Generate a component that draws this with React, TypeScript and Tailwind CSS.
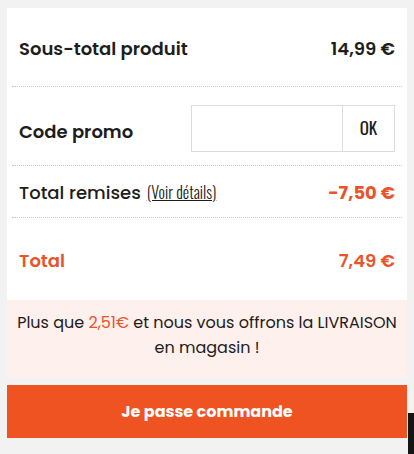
import React from 'react';

const Row: React.FC<{ className?: string; children: React.ReactNode }> = ({ className = '', children }) => (
    <div className={`mx-[5px] px-[7px] flex items-center justify-between border-b border-dotted border-[#c8c8c8] ${className}`}>
        {children}
    </div>
);

const condensed = "font-['Oswald','DejaVu_Sans_Condensed','Liberation_Sans_Narrow',sans-serif]";

const CartSummary: React.FC = () => {
    return (
        <div className="relative min-h-[454px] bg-[#f2f2f2] pt-2 px-[7px] font-['Poppins','Open_Sans',sans-serif] text-[#1d1d1b]">
            <div className="bg-white">
                <Row className="h-[79px] pt-[2px]">
                    <span className="text-[18px] font-semibold">Sous-total produit</span>
                    <span className="text-[18px] font-semibold">14,99 €</span>
                </Row>

                <Row className="h-[79px]">
                    <span className="text-[18px] font-semibold pt-[10px]">Code promo</span>
                    <div className="flex h-[47px] w-[204px] border border-[#dcdcdc] mt-1">
                        <input className="flex-1 min-w-0 outline-none px-2" aria-label="Code promo" />
                        <button className={`w-[52px] border-l border-[#dcdcdc] text-[17px] ${condensed}`}>
                            OK
                        </button>
                    </div>
                </Row>

                <Row className="h-[52px] pt-[1px]">
                    <span className="flex items-baseline gap-1.5">
                        <span className="text-[18px] font-medium">Total remises</span>
                        <a href="#" className={`text-[16px] font-light underline ${condensed}`}>
                            (Voir détails)
                        </a>
                    </span>
                    <span className="text-[18px] font-bold text-[#e9542a]">-7,50 €</span>
                </Row>

                <div className="mx-[5px] px-[7px] h-[82px] flex items-center justify-between pt-[2px]">
                    <span className="text-[18px] font-semibold text-[#e9542a]">Total</span>
                    <span className="text-[18px] font-semibold text-[#e9542a]">7,49 €</span>
                </div>
            </div>

            <div className="bg-[#fdf0ed] px-2 pt-[10px] pb-[18px] text-center text-[16px] leading-[25px]">
                Plus que <span className="text-[#e9542a]">2,51€</span> et nous vous offrons la LIVRAISON en magasin !
            </div>

            <button className="mt-[7px] w-full h-[53px] bg-[#ef5322] text-white text-[16px] font-bold">
                Je passe commande
            </button>

            <div className="absolute right-0 top-[413px] w-[6px] h-[41px] bg-[#151515]"></div>
        </div>
    );
};

export default function App() {
    return <CartSummary />;
}
